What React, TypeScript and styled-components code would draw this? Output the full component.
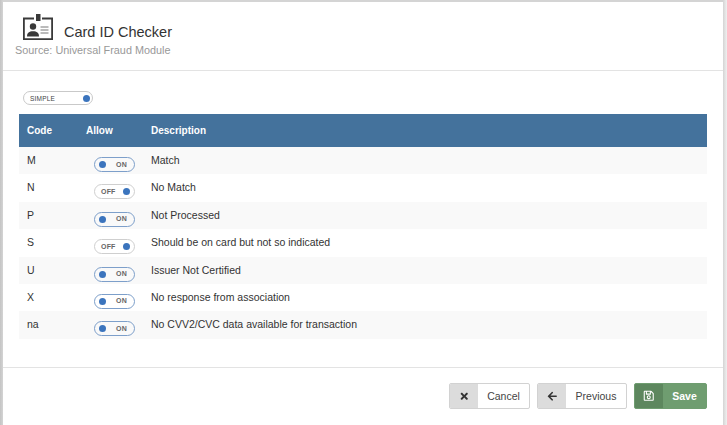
import React from 'react';
import styled, { createGlobalStyle } from 'styled-components';
import { FaTimes, FaArrowLeft, FaRegSave } from 'react-icons/fa';

const GlobalStyle = createGlobalStyle`
	html, body {
		margin: 0;
		height: 425px;
		overflow: hidden;
		background: #d9d9d9;
		font-family: 'Liberation Sans', Arial, sans-serif;
	}
`;

const Page = styled.div`
	width: 727px;
	height: 425px;
	padding: 2px 4px 0 3px;
	box-sizing: border-box;
	background: linear-gradient(90deg, #c4c4c4 0, #d4d4d4 3px, #d4d4d4 723px, #f0f0f0 727px);
`;

const Modal = styled.div`
	width: 720px;
	height: 423px;
	background: #fff;
	display: flex;
	flex-direction: column;
`;

const Header = styled.header`
	height: 69px;
	box-sizing: border-box;
	border-bottom: 1px solid #e3e3e3;
	padding: 12px 0 0 12px;
`;

const TitleRow = styled.div`
	display: flex;
	align-items: flex-start;
	padding-left: 6px;
	height: 29px;
`;

const Title = styled.h1`
	margin: 9px 0 0 11px;
	font-size: 14.5px;
	line-height: 18px;
	font-weight: 400;
	color: #333;
`;

const Source = styled.div`
	margin-top: 0;
	font-size: 10.85px;
	line-height: 14px;
	color: #999;
`;

const Body = styled.main`
	flex: 1;
	padding: 20px 16px 0;
`;

const ModeToggle = styled.div`
	width: 70px;
	height: 14px;
	margin-left: 4px;
	box-sizing: border-box;
	border: 1px solid #c9c9c9;
	border-radius: 8px;
	display: flex;
	align-items: center;
	justify-content: space-between;
	padding: 0 2px 0 6px;
	font-size: 6.5px;
	letter-spacing: 0.2px;
	color: #444;
`;

const Dot = styled.span`
	width: 7px;
	height: 7px;
	border-radius: 50%;
	background: #3b74bd;
`;

const Table = styled.div`
	margin-top: 9px;
	width: 688px;
`;

const HeadRow = styled.div`
	height: 33px;
	background: #44729c;
	display: grid;
	grid-template-columns: 59px 65px 1fr;
	align-items: center;
	padding-left: 8px;
	font-size: 10px;
	font-weight: 700;
	color: #fff;
`;

const Row = styled.div<{ $striped: boolean }>`
	height: 27.4px;
	background: ${props => (props.$striped ? '#f9f9f9' : '#fff')};
	display: grid;
	grid-template-columns: 59px 65px 1fr;
	padding-left: 8px;
	font-size: 10.5px;
	line-height: 12px;
	color: #333;
`;

const Cell = styled.div`
	padding-top: 7px;
`;

const Switch = styled.div<{ $on: boolean }>`
	width: 41px;
	height: 15px;
	margin: 10px 0 0 8px;
	box-sizing: border-box;
	border: 1px solid ${props => (props.$on ? '#7d9fca' : '#cfcfcf')};
	border-radius: 8px;
	display: flex;
	flex-direction: ${props => (props.$on ? 'row' : 'row-reverse')};
	align-items: center;
	justify-content: space-between;
	padding: ${props => (props.$on ? '0 7px 0 4px' : '0 4px 0 6px')};
	font-size: 7px;
	font-weight: 700;
	letter-spacing: 0.2px;
	color: #666;
`;

const Footer = styled.footer`
	height: 58px;
	box-sizing: border-box;
	border-top: 1px solid #e3e3e3;
	display: flex;
	justify-content: flex-end;
	gap: 7px;
	padding: 15px 16px 0 0;
`;

const Button = styled.button<{ $width: number; $primary?: boolean }>`
	width: ${props => props.$width}px;
	height: 26px;
	padding: 0;
	display: flex;
	align-items: stretch;
	overflow: hidden;
	box-sizing: border-box;
	border: 1px solid ${props => (props.$primary ? '#6f9d70' : '#d2d2d2')};
	border-radius: 2px;
	background: ${props => (props.$primary ? '#6f9d70' : '#fff')};
	color: ${props => (props.$primary ? '#fff' : '#444')};
	font-family: inherit;
	font-size: 10.5px;
	font-weight: ${props => (props.$primary ? 700 : 400)};
`;

const ButtonIcon = styled.span<{ $primary?: boolean }>`
	width: 28px;
	flex: none;
	display: flex;
	align-items: center;
	justify-content: center;
	font-size: ${props => (props.$primary ? 11.5 : 10.5)}px;
	background: ${props => (props.$primary ? '#5d875e' : '#dcdcdc')};
	color: ${props => (props.$primary ? '#fff' : '#333')};
`;

const ButtonLabel = styled.span`
	flex: 1;
	display: flex;
	align-items: center;
	justify-content: center;
`;

const CardIcon = () => (
	<svg width="32" height="28" viewBox="0 0 32 28" fill="none">
		<path d="M13 4.5H2.9v20.6h28.2V4.5H21" stroke="#3a3a3a" strokeWidth="1.8" />
		<rect x="15" y="0" width="4.5" height="7" fill="#3a3a3a" />
		<circle cx="12" cy="12.5" r="3.2" fill="#3a3a3a" />
		<path d="M6 22.5c0-3.8 2.2-5.2 6-5.2s6 1.4 6 5.2z" fill="#3a3a3a" />
		<path d="M19.5 13h8M19.5 16h8M19.5 19h8" stroke="#777" strokeWidth="1" />
	</svg>
);

const rows = [
	{ code: 'M', on: true, text: 'Match' },
	{ code: 'N', on: false, text: 'No Match' },
	{ code: 'P', on: true, text: 'Not Processed' },
	{ code: 'S', on: false, text: 'Should be on card but not so indicated' },
	{ code: 'U', on: true, text: 'Issuer Not Certified' },
	{ code: 'X', on: true, text: 'No response from association' },
	{ code: 'na', on: true, text: 'No CVV2/CVC data available for transaction' },
];

const App = () => {
	return (
		<Page>
			<GlobalStyle />
			<Modal>
				<Header>
					<TitleRow>
						<CardIcon />
						<Title>Card ID Checker</Title>
					</TitleRow>
					<Source>Source: Universal Fraud Module</Source>
				</Header>
				<Body>
					<ModeToggle>
						SIMPLE
						<Dot />
					</ModeToggle>
					<Table>
						<HeadRow>
							<div>Code</div>
							<div>Allow</div>
							<div>Description</div>
						</HeadRow>
						{rows.map((row, i) => (
							<Row key={row.code} $striped={i % 2 === 0}>
								<Cell>{row.code}</Cell>
								<div>
									<Switch $on={row.on}>
										<Dot />
										{row.on ? 'ON' : 'OFF'}
									</Switch>
								</div>
								<Cell>{row.text}</Cell>
							</Row>
						))}
					</Table>
				</Body>
				<Footer>
					<Button $width={81}>
						<ButtonIcon>
							<FaTimes />
						</ButtonIcon>
						<ButtonLabel>Cancel</ButtonLabel>
					</Button>
					<Button $width={90}>
						<ButtonIcon>
							<FaArrowLeft />
						</ButtonIcon>
						<ButtonLabel>Previous</ButtonLabel>
					</Button>
					<Button $width={73} $primary>
						<ButtonIcon $primary>
							<FaRegSave />
						</ButtonIcon>
						<ButtonLabel>Save</ButtonLabel>
					</Button>
				</Footer>
			</Modal>
		</Page>
	);
};

export default App;
